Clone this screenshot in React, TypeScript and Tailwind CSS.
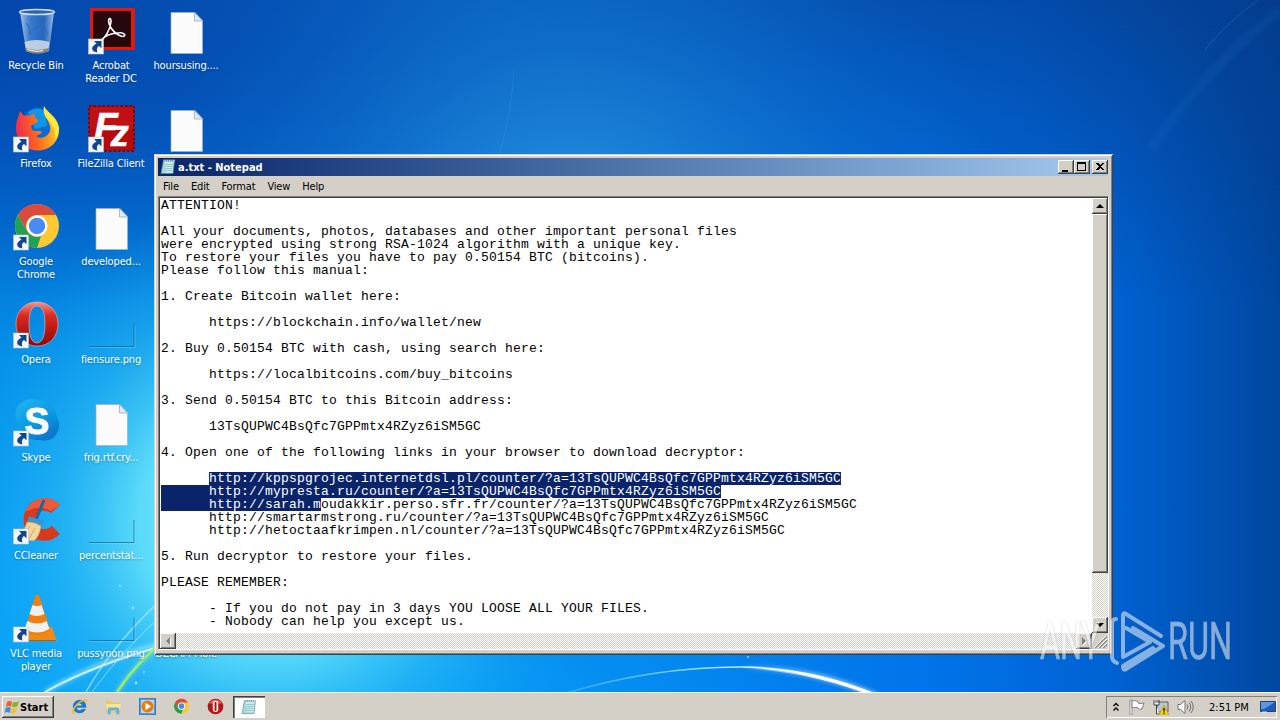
import { ReactElement, ReactNode } from "react";
import cn from "clsx";

const raised =
  "bg-[#d4d0c8] shadow-[inset_-1px_-1px_#404040,inset_1px_1px_#fff,inset_-2px_-2px_#808080]";
const dither =
  "bg-[repeating-conic-gradient(#fff_0_25%,#d4d0c8_0_50%)] bg-[length:2px_2px]";
const uiFont =
  "font-['DejaVu_Sans_Condensed','DejaVu_Sans',sans-serif] [font-stretch:condensed] text-[11px] leading-[13px]";

function Wallpaper(): ReactElement {
  return (
    <svg
      className="absolute inset-0"
      width="1280"
      height="720"
      viewBox="0 0 1280 720"
      preserveAspectRatio="none"
    >
      <defs>
        <linearGradient id="sky" x1="0" y1="0" x2="0" y2="1">
          <stop offset="0" stopColor="#0449ae" />
          <stop offset=".25" stopColor="#0468ce" />
          <stop offset=".5" stopColor="#0490e8" />
          <stop offset=".8" stopColor="#06a0f6" />
          <stop offset="1" stopColor="#08a4f8" />
        </linearGradient>
        <linearGradient id="east" x1="0" x2="1" y1="0" y2="0">
          <stop offset=".3" stopColor="#0070e8" stopOpacity="0" />
          <stop offset=".72" stopColor="#0074ea" />
          <stop offset=".87" stopColor="#0062d2" />
          <stop offset="1" stopColor="#00479f" />
        </linearGradient>
        <linearGradient id="top" x1="0" x2="1" y1="0" y2="0">
          <stop offset="0" stopColor="#0448ae" />
          <stop offset=".4" stopColor="#0558b8" />
          <stop offset=".8" stopColor="#044cab" />
          <stop offset="1" stopColor="#033c8c" />
        </linearGradient>
        <linearGradient id="fade" x1="0" x2="0" y1="0" y2="1">
          <stop offset="0" stopColor="#fff" />
          <stop offset="1" stopColor="#fff" stopOpacity="0" />
        </linearGradient>
        <mask id="topMask">
          <rect width="1280" height="300" fill="url(#fade)" />
        </mask>
        <radialGradient
          id="glow"
          gradientUnits="userSpaceOnUse"
          cx="270"
          cy="520"
          r="330"
        >
          <stop offset="0" stopColor="#8ff4ff" />
          <stop offset=".4" stopColor="#62e0fa" stopOpacity=".92" />
          <stop offset=".65" stopColor="#30bdf5" stopOpacity=".55" />
          <stop offset="1" stopColor="#10a0f0" stopOpacity="0" />
        </radialGradient>
        <radialGradient
          id="haze"
          gradientUnits="userSpaceOnUse"
          cx="570"
          cy="250"
          r="430"
        >
          <stop offset="0" stopColor="#38a8ea" stopOpacity=".8" />
          <stop offset=".45" stopColor="#1c86da" stopOpacity=".5" />
          <stop offset="1" stopColor="#0868cc" stopOpacity="0" />
        </radialGradient>
        <linearGradient id="arc" x1="0" x2="1">
          <stop offset="0" stopColor="#7fd8ff" stopOpacity=".3" />
          <stop offset=".5" stopColor="#a8e6ff" />
          <stop offset=".75" stopColor="#fff" />
        </linearGradient>
        <linearGradient id="arcTail" x1="0" x2="1">
          <stop offset="0" stopColor="#fff" stopOpacity="0" />
          <stop offset=".6" stopColor="#fff" />
        </linearGradient>
        <filter id="soft" x="-20%" y="-40%" width="140%" height="180%">
          <feGaussianBlur stdDeviation="2" />
        </filter>
      </defs>
      <rect width="1280" height="720" fill="url(#sky)" />
      <rect width="1280" height="720" fill="url(#east)" />
      <rect width="1280" height="300" fill="url(#top)" mask="url(#topMask)" />
      <rect width="1280" height="720" fill="url(#glow)" />
      <rect width="1280" height="720" fill="url(#haze)" />
      <g fill="none">
        <path d="M1280 10Q1205 70 1150 150" stroke="#2e86d8" strokeWidth="10" opacity=".1" filter="url(#soft)" />
        <path d="M1258 0Q1225 24 1205 50" stroke="#4a9ce2" opacity=".25" />
        <path d="M514 70Q512 110 498 160" stroke="#4aa8ea" opacity=".2" />
        <path d="M45 692Q110 655 175 640" stroke="#bff2ff" strokeWidth="4" opacity=".6" filter="url(#soft)" />
        <path d="M45 692Q95 664 170 644" stroke="#dcf8ff" strokeWidth="2" opacity=".85" />
        <path d="M86 692Q115 640 170 592" stroke="#c8f6ff" strokeWidth="1.5" opacity=".6" />
        <path d="M92 692Q122 650 172 606" stroke="#c8f6ff" opacity=".6" />
        <path d="M117 692Q138 660 170 636" stroke="#8bea5a" strokeWidth="2.5" />
        <path d="M117 692Q138 660 170 636" stroke="#c8f6a0" strokeWidth="5" opacity=".35" filter="url(#soft)" />
        <path d="M560 695Q650 667 740 667Q812 668 877 696" stroke="url(#arc)" strokeWidth="1.5" />
        <path d="M740 667Q812 668 877 696" stroke="url(#arcTail)" strokeWidth="5" opacity=".6" filter="url(#soft)" />
        <path d="M740 667Q812 669 877 696" stroke="url(#arcTail)" strokeWidth="3.5" />
      </g>
      <g fill="#c8f6ff" opacity=".7">
        <circle cx="120" cy="586" r="1" />
        <circle cx="133" cy="608" r="1.2" />
        <circle cx="136" cy="683" r="1.4" />
        <circle cx="144" cy="672" r="1" />
        <circle cx="748" cy="657" r="1" />
      </g>
    </svg>
  );
}

function ShortcutArrow() {
  return (
    <g transform="translate(1.5 33)">
      <rect width="15" height="15" fill="#f4f8fb" stroke="#b8c6d4" strokeWidth=".6" />
      <path
        d="M5.500 2h7.500v7.300l-2.500-2.300c-2 1.200-2.600 3-1.600 6.500C3.600 13 .8 8.200 8 4.500Z"
        fill="#12468c"
      />
    </g>
  );
}

function RecycleBin() {
  return (
    <>
      <defs>
        <linearGradient id="glass">
          <stop offset="0" stopColor="#c4dcf2" stopOpacity=".85" />
          <stop offset=".3" stopColor="#4f8fd8" stopOpacity=".7" />
          <stop offset=".7" stopColor="#3b7bcc" stopOpacity=".6" />
          <stop offset="1" stopColor="#bcd6f0" stopOpacity=".85" />
        </linearGradient>
      </defs>
      <path d="M8 6h34l-5 39q-12 4-23 0Z" fill="url(#glass)" />
      <path d="M12.500 36q12-4 25 0l-1.200 9q-12 4-22 0Z" fill="#dfe3e6" opacity=".8" />
      <path d="M13.500 42q11 4 23.500 0l-.6 3.500q-11 4.500-22.400 0Z" fill="#8d8378" />
      <path d="M15 43.500q10 3 16 1" stroke="#fff" fill="none" />
      <ellipse cx="25" cy="6" rx="17.500" ry="2.600" fill="#2c65ac" stroke="#cfdce9" strokeWidth="1.500" />
      <path d="M14 17q5 5 4 12M35 12q-7 8-13 12m10-4 4 9" stroke="#2f68b0" strokeWidth="1.500" fill="none" opacity=".7" />
    </>
  );
}

function Acrobat() {
  return (
    <>
      <rect x="3" y="2" width="45" height="42" fill="#e4190e" />
      <rect x="6" y="5" width="38" height="36" fill="#26080c" />
      <path
        d="M12 37c7-6 11-14 12-21 .5-4.500-3-4.500-2.300 0C23 23 30 30 36 30.500c3.500-.5 1.500-4-3.500-3.700-7.500.2-15 2.700-20 9"
        fill="none"
        stroke="#fff"
        strokeWidth="1.600"
      />
    </>
  );
}

function Firefox() {
  return (
    <>
      <defs>
        <linearGradient id="fox" x1="0" y1=".3" x2="1" y2=".1">
          <stop offset="0" stopColor="#f0304a" />
          <stop offset=".4" stopColor="#ff6a1c" />
          <stop offset=".75" stopColor="#ffb020" />
          <stop offset="1" stopColor="#ffd83a" />
        </linearGradient>
      </defs>
      <circle cx="26" cy="21" r="17" fill="#0a6cd4" />
      <path d="M16 8q10-7 17 0l2 14-12 3Z" fill="#12a8f0" opacity=".7" />
      <path
        d="M32 2C34 8 45 12 47 24C48 37 38 46.500 26 46.500C12 46.500 4 36 4 24C4 16 7 12 8 7L12 12C16 11 18 12 20 11L23 9C22 13 23 15 26 16C25 20 20 20 19 22L20 26C24 28 28 26 30 28C28 31 25 31 24 32C28 36 36 33 38 27C40 20 32 14 32 2Z"
        fill="url(#fox)"
      />
      <path d="M32 2C34 8 45 12 47 24C47 29 45 33 43 35C44 26 40 20 36 16C32 12 31 7 32 2Z" fill="#ffe83c" />
    </>
  );
}

function FileZilla() {
  return (
    <>
      <rect x="2" y="2" width="45" height="45" fill="#b50a0e" stroke="#7d0508" strokeWidth="2" strokeDasharray="2.500 2" />
      <path d="M3 3h43v22H3Z" fill="#c81418" opacity=".6" />
      <text
        x="7"
        y="36"
        fontFamily="Liberation Sans, sans-serif"
        fontSize="39"
        fontWeight="700"
        fontStyle="italic"
        fill="#fff"
        stroke="#fff"
        strokeWidth=".6"
      >
        F<tspan dx="-7" dy="6" fontSize="36">z</tspan>
      </text>
    </>
  );
}

function Chrome() {
  return (
    <>
      <circle cx="25" cy="24" r="22" fill="#fcc934" />
      <path d="M6 13A22 22 0 0 1 44 13H25A11 11 0 0 0 15.500 29.500Z" fill="#dc4a3d" />
      <path d="M6 13 15.500 29.500A11 11 0 0 0 29 34L25 46A22 22 0 0 1 6 13Z" fill="#23a055" />
      <circle cx="25" cy="24" r="10.500" fill="#fff" />
      <circle cx="25" cy="24" r="8.200" fill="#4a8af4" />
    </>
  );
}

function Opera() {
  return (
    <>
      <defs>
        <linearGradient id="operaRed" x1="0" y1="0" x2="0" y2="1">
          <stop offset="0" stopColor="#f4948a" />
          <stop offset=".3" stopColor="#dc2a20" />
          <stop offset="1" stopColor="#8e0606" />
        </linearGradient>
      </defs>
      <path
        fillRule="evenodd"
        d="M25 2C12 2 4 12 4 24s8 22 21 22 21-10 21-22S38 2 25 2Zm0 4c6 0 8 8 8 18s-2 19-8 19-8-9-8-19 2-18 8-18Z"
        fill="url(#operaRed)"
        stroke="#f0b8b0"
        strokeWidth=".6"
      />
    </>
  );
}

function Skype() {
  return (
    <>
      <defs>
        <linearGradient id="skype" x1="0" y1="0" x2=".6" y2="1">
          <stop offset="0" stopColor="#22b4f2" />
          <stop offset=".6" stopColor="#0c9ae2" />
          <stop offset="1" stopColor="#0a78cc" />
        </linearGradient>
      </defs>
      <path
        d="M14 2c5-2 8 0 12 0 11 1 18 8 19 18 4 6 2 14-3 19-4 4-9 4-14 3C15 43 7 36 6 25 0 16 5 5 14 2Z"
        fill="url(#skype)"
      />
      <text x="12.5" y="35.5" fontFamily="Liberation Sans, sans-serif" fontSize="37" fontWeight="700" fill="#fff" stroke="#fff" strokeWidth="1">S</text>
    </>
  );
}

function CCleaner() {
  return (
    <>
      <path
        d="M48 9C42 2 32 0 22 5 9 13 8 32 20 41c9 6 20 5 28-3l-8-8c-6 5-14 4-16-3-2-9 6-16 15-10Z"
        fill="#d8381e"
      />
      <path d="M48 9C42 2 32 0 22 5q-6 4-9 11 15-8 26-1Z" fill="#ec5a3a" />
      <path d="m32 4-8 20" stroke="#1668a8" strokeWidth="3" />
      <path d="m17 20 15 5-3 6-14-4Z" fill="#3c94cc" />
      <path d="M15 26q8 0 14 4c-1 8-4 13-8 15L3 42q9-5 12-16Z" fill="#f6d49a" stroke="#c89c5c" strokeWidth=".6" />
      <path d="M18 30 10 42m13-10-6 11" stroke="#d4a868" />
    </>
  );
}

function Vlc() {
  return (
    <>
      <path d="M10 33h30l5 14H3Z" fill="#f08a14" />
      <path d="M23.500 1q2-1 4 1l11 35q-13 8-26 0Z" fill="#f07e10" />
      <path d="m20.500 11-3 9q7 4 15 0l-3-9q-5 2-9 0Zm-5 16-3 8q13 7 25 0l-3-8q-9 5-19 0Z" fill="#eef0f2" />
      <path d="M6 46.500h38" stroke="#b85c08" />
    </>
  );
}

function Paper() {
  return (
    <>
      <path d="M9 6.500h24l7.500 8V47.500H9Z" fill="#fbfbfc" stroke="#9cb0c4" strokeWidth=".7" />
      <path d="M32.500 6.500v8.500h8Z" fill="#e2e9f0" stroke="#8fa4b8" strokeWidth=".7" />
    </>
  );
}

function BlankImage() {
  return (
    <>
      <path d="M2 46.500h45V24" fill="none" stroke="#0c5c88" opacity=".65" />
      <path d="M2 47.500h46V25" fill="none" stroke="#9fe4ff" opacity=".3" />
    </>
  );
}

type DesktopItem = {
  title: string;
  icon?: ReactNode;
  shortcut?: boolean;
};

const columns: DesktopItem[][] = [
  [
    { title: "Recycle Bin", icon: <RecycleBin /> },
    { title: "Firefox", icon: <Firefox />, shortcut: true },
    { title: "Google Chrome", icon: <Chrome />, shortcut: true },
    { title: "Opera", icon: <Opera />, shortcut: true },
    { title: "Skype", icon: <Skype />, shortcut: true },
    { title: "CCleaner", icon: <CCleaner />, shortcut: true },
    { title: "VLC media player", icon: <Vlc />, shortcut: true },
  ],
  [
    { title: "Acrobat Reader DC", icon: <Acrobat />, shortcut: true },
    { title: "FileZilla Client", icon: <FileZilla />, shortcut: true },
    { title: "developed...", icon: <Paper /> },
    { title: "fiensure.png", icon: <BlankImage /> },
    { title: "frig.rtf.cry...", icon: <Paper /> },
    { title: "percentstat...", icon: <BlankImage /> },
    { title: "pussynon.png", icon: <BlankImage /> },
  ],
  [
    { title: "hoursusing....", icon: <Paper /> },
    { title: "", icon: <Paper /> },
    { title: "" },
    { title: "" },
    { title: "" },
    { title: "" },
    { title: "DECAM-Mole" },
  ],
];

function DesktopIcon({ title, icon, shortcut }: DesktopItem): ReactElement {
  return (
    <div className="flex h-[98px] w-[75px] flex-col items-center">
      <svg width="48" height="48" viewBox="0 0 48 48" className="shrink-0 overflow-visible">
        {icon}
        {shortcut && <ShortcutArrow />}
      </svg>
      <span
        className={cn(
          uiFont,
          "mt-[5px] max-w-[74px] text-center tracking-[-0.15px] text-white [text-shadow:0_1px_2px_rgba(0,30,80,.4)]"
        )}
      >
        {title}
      </span>
    </div>
  );
}

function NotepadIcon() {
  return (
    <svg width="16" height="16" viewBox="0 0 16 16">
      <path d="M3.500 1.500h11l-1.500 13H1Z" fill="#a9d8dc" stroke="#5c8c98" strokeWidth=".7" />
      <path d="M4.500 3h9l-1 10.500h-7Z" fill="#c8ecec" />
      <path d="M5 5.500h8M4.800 7.500h8M4.600 9.500h8M4.400 11.500h8" stroke="#7cb8c0" strokeWidth=".7" />
      <path d="M4 .5v2M6 .5v2M8 .5v2M10 .5v2M12 .5v2M14 .5v2" stroke="#e8f4f4" />
      <path d="M4.500 1v2M6.500 1v2M8.500 1v2M10.500 1v2M12.500 1v2" stroke="#507880" strokeWidth=".5" />
    </svg>
  );
}

const before = `ATTENTION!

All your documents, photos, databases and other important personal files
were encrypted using strong RSA-1024 algorithm with a unique key.
To restore your files you have to pay 0.50154 BTC (bitcoins).
Please follow this manual:

1. Create Bitcoin wallet here:

      https://blockchain.info/wallet/new

2. Buy 0.50154 BTC with cash, using search here:

      https://localbitcoins.com/buy_bitcoins

3. Send 0.50154 BTC to this Bitcoin address:

      13TsQUPWC4BsQfc7GPPmtx4RZyz6iSM5GC

4. Open one of the following links in your browser to download decryptor:

      `;
const selected = [
  "http://kppspgrojec.internetdsl.pl/counter/?a=13TsQUPWC4BsQfc7GPPmtx4RZyz6iSM5GC",
  "      http://mypresta.ru/counter/?a=13TsQUPWC4BsQfc7GPPmtx4RZyz6iSM5GC",
  "      http://sarah.m",
];
const after = `oudakkir.perso.sfr.fr/counter/?a=13TsQUPWC4BsQfc7GPPmtx4RZyz6iSM5GC
      http://smartarmstrong.ru/counter/?a=13TsQUPWC4BsQfc7GPPmtx4RZyz6iSM5GC
      http://hetoctaafkrimpen.nl/counter/?a=13TsQUPWC4BsQfc7GPPmtx4RZyz6iSM5GC

5. Run decryptor to restore your files.

PLEASE REMEMBER:

      - If you do not pay in 3 days YOU LOOSE ALL YOUR FILES.
      - Nobody can help you except us.`;

function ArrowButton({ d, disabled }: { d: string; disabled?: boolean }) {
  return (
    <div className={cn(raised, "size-4 shrink-0")}>
      <svg width="16" height="16" viewBox="0 0 16 16">
        {disabled && <path d={d} fill="#fff" transform="translate(1 1)" />}
        <path d={d} fill={disabled ? "#808080" : "#000"} />
      </svg>
    </div>
  );
}

function Notepad(): ReactElement {
  return (
    <div className="absolute left-[154px] top-[154px] flex h-[501px] w-[959px] flex-col bg-[#d4d0c8] p-1 pb-1.5 pr-[5px] shadow-[inset_1px_1px_#d4d0c8,inset_-1px_-1px_#404040,inset_2px_2px_#fff,inset_-2px_-2px_#808080]">
      <div className="flex h-[18px] shrink-0 items-center bg-linear-to-r from-[#0a246a] to-[#a6caf0] pl-[2px]">
        <NotepadIcon />
        <span className={cn(uiFont, "ml-[2px] flex-1 font-bold text-white")}>
          a.txt - Notepad
        </span>
        {[
          "M4 10h6v2H4Z",
          "M3 2h9v9H3ZM4 4v6h7V4Z",
          "M4 3h2l2 2 2-2h2L9 6.500l3 3.500h-2L8 8l-2 2H4l3-3.500Z",
        ].map((d, i) => (
          <div key={d} className={cn(raised, "h-[14px] w-4", i === 2 && "ml-0.5")}>
            <svg width="16" height="14" viewBox="0 0 16 14" shapeRendering="crispEdges">
              <path d={d} fillRule="evenodd" />
            </svg>
          </div>
        ))}
      </div>
      <div className={cn(uiFont, "flex h-5 shrink-0 items-center gap-[12px] pl-[5px] tracking-[-0.15px] text-black")}>
        {["File", "Edit", "Format", "View", "Help"].map((item) => (
          <span key={item}>{item}</span>
        ))}
      </div>
      <div className="flex min-h-0 flex-1 flex-col bg-white pl-0.5 pt-0.5 shadow-[inset_1px_1px_#808080,inset_2px_2px_#404040,1px_1px_#fff]">
        <div className="flex min-h-0 flex-1">
          <pre className="min-w-0 flex-1 overflow-hidden pl-px pt-px font-['Liberation_Mono',monospace] text-[13px] leading-[13px] tracking-[0.2px] text-black">
            {before}
            {selected.map((line, i) => (
              <span key={line}>
                <span className="inline-block h-[13px] bg-[#0a246a] align-top text-white">{line}</span>
                {i < 2 && "\n"}
              </span>
            ))}
            {after}
          </pre>
          <div className={cn(dither, "flex w-4 flex-col")}>
            <ArrowButton d="M8 6l4 4H4Z" />
            <div className={cn(raised, "h-[359px]")} />
            <div className="flex-1" />
            <ArrowButton d="M4 6h8l-4 4Z" />
          </div>
        </div>
        <div className="flex h-4 shrink-0">
          <div className={cn(dither, "flex flex-1 justify-between")}>
            <ArrowButton d="M10 4v8L6 8Z" disabled />
            <ArrowButton d="M6 4v8l4-4Z" disabled />
          </div>
          <svg width="16" height="16" viewBox="0 0 16 16" className="bg-[#d4d0c8]">
            <path d="M15 3 3 15M15 7l-8 8M15 11l-4 4" stroke="#808080" strokeWidth="1.500" />
            <path d="M15 2 2 15M15 6l-9 9M15 10l-5 5" stroke="#fff" />
          </svg>
        </div>
      </div>
    </div>
  );
}

function Watermark() {
  return (
    <svg
      className="absolute left-[1036px] top-[606px] drop-shadow-[0_0_1px_rgba(60,80,110,.5)]"
      width="230"
      height="74"
      viewBox="0 0 230 74"
      fill="#fff"
      opacity=".52"
    >
      <g fontFamily="Roboto, sans-serif" fontSize="51" stroke="#fff" strokeWidth=".6">
        <text x="4" y="53" textLength="60" lengthAdjust="spacingAndGlyphs">ANY</text>
        <text x="132" y="53" textLength="64" lengthAdjust="spacingAndGlyphs">RUN</text>
      </g>
      <g fill="none" stroke="#fff" strokeWidth="4" strokeLinejoin="round" strokeLinecap="round">
        <path d="M80 13q-4 0-4 4v34q0 4 5 6" />
        <path d="M125 30 90 8q-3-2-3 2v41l27-15-24-14" />
        <path d="m97 22 30 18-37 23q-3 2-3-3l30-18" />
      </g>
    </svg>
  );
}

function SmallIcon({ children }: { children: ReactNode }) {
  return (
    <svg width="17" height="17" viewBox="0 0 50 50">
      {children}
    </svg>
  );
}

function Taskbar(): ReactElement {
  return (
    <div
      className={cn(
        uiFont,
        "relative flex h-7 shrink-0 items-center border-t border-white bg-[#d4d0c8] pl-0.5 pr-[3px] text-black"
      )}
    >
      <div className={cn(raised, "mt-px flex h-[22px] w-[52px] items-center pl-[2px] font-bold")}>
        <svg width="16" height="16" viewBox="0 0 16 16">
          <path d="M3 3q3-2 5 0L7 8Q5 6 2 8Z" fill="#ee6028" />
          <path d="M9 3q3 1 6-1l-1.500 5Q11 9 8 7.500Z" fill="#7cb828" />
          <path d="M1.800 9q2.700-2 5 0l-1 5Q3 12 .5 14Z" fill="#3a8ee0" />
          <path d="M7.800 9q3 1 5.500-.5L12 13q-3 2-5.500 1Z" fill="#f8c020" />
        </svg>
        <span>Start</span>
      </div>
      <div className="ml-[17px] flex items-center gap-[17px]">
        <SmallIcon>
          <path fillRule="evenodd" d="M25 5a20 20 0 1 0 19 27H32c-4 6-14 5-15-3h28C46 15 38 5 25 5Zm-8 17c2-8 14-8 15 0Z" fill="#1c78d0" />
          <path d="M4 46C-4 36 26 2 44 3c6 1 3 9 0 13 1-6-1-8-6-7C22 13 4 38 8 42c3 2 8 0 12-3-6 6-13 10-16 7Z" fill="#f0c030" />
        </SmallIcon>
        <SmallIcon>
          <path d="M3 8h16l4 5h22v30H3Z" fill="#e8c860" />
          <path d="M3 18h44l-3 18H6Z" fill="#f8e498" />
          <path d="M8 48V34q0-6 6-6h22q6 0 6 6v14h-9V36H17v12Z" fill="#60b4e0" />
        </SmallIcon>
        <SmallIcon>
          <path d="M1 1h48v48H1Z" fill="#5c9cdc" stroke="#2c70b8" strokeWidth="3" />
          <path d="M6 6h38v38H6Z" fill="#b8d8f4" />
          <circle cx="25" cy="25" r="18" fill="#f07c08" />
          <path d="m19 14 17 11-17 11Z" fill="#fff" />
        </SmallIcon>
        <SmallIcon>
          <Chrome />
        </SmallIcon>
        <SmallIcon>
          <circle cx="25" cy="25" r="23" fill="#b81418" />
          <path d="M6 16a22 22 0 0 1 38 0Z" fill="#e86460" />
          <rect x="17" y="8" width="16" height="33" rx="8" fill="#fff" />
          <rect x="22" y="11" width="6" height="27" rx="3" fill="#b81418" />
        </SmallIcon>
      </div>
      <div className="ml-[9px] mt-px flex h-[22px] w-8 items-center justify-center bg-white shadow-[inset_1px_1px_#404040,inset_2px_2px_#808080,inset_-1px_-1px_#fff]">
        <NotepadIcon />
      </div>
      <div className="ml-auto mt-px flex h-[22px] w-[171px] items-center pl-[6px] shadow-[inset_1px_1px_#808080,inset_-1px_-1px_#fff]">
        <svg width="8" height="10" viewBox="0 0 8 10" fill="none" stroke="#000" strokeWidth="1.300">
          <path d="m1.500 4 2.500-2.500L6.500 4M1.500 8.500 4 6l2.500 2.500" />
        </svg>
        <svg className="ml-[8px]" width="17" height="16" viewBox="0 0 17 16">
          <path d="M2 1h2v15H2Z" fill="#fff" stroke="#707070" strokeWidth=".7" />
          <path d="M4 2q3-1 6 .5v1.500q3 1 6 0L14 10q-3 1-5-1.500Q6 8 4 9Z" fill="#fff" stroke="#686868" strokeWidth=".8" />
        </svg>
        <svg className="ml-[8px]" width="16" height="16" viewBox="0 0 16 16">
          <path d="M4 3h11v10H4Z" fill="#b8c8d8" stroke="#606060" />
          <path d="M1 1v5h5V1M3.500 6v9H6M3 1v3M5 1v3" fill="#fff" stroke="#404040" />
          <path d="m11 6 5 10H6Z" fill="#f8d410" stroke="#a88800" strokeWidth=".6" />
          <path d="M11 9v3.500M11 13.500v1.200" stroke="#000" strokeWidth="1.300" />
        </svg>
        <svg className="ml-[8px]" width="17" height="16" viewBox="0 0 17 16" fill="none" stroke="#707070">
          <path d="M1 5.500h2.500L8 1.500v13l-4.500-4H1Z" fill="#fff" />
          <path d="M10 5.500q2 2.500 0 5M12 3.500q3.500 4.500 0 9M14 2q4.500 6 0 12" />
        </svg>
        <span className="ml-[15px] whitespace-nowrap">2:51 PM</span>
        <svg className="ml-auto mr-px" width="16" height="14" viewBox="0 0 16 14">
          <path d="M.5 1.500h15v10H.5Z" fill="#1c5cc0" stroke="#24406c" />
          <path d="M1 2h14L4 9H1Z" fill="#5c98e0" />
          <path d="M2 11.500h5v1.500H2Z" fill="#d8e8f8" />
        </svg>
      </div>
    </div>
  );
}

export default function App(): ReactElement {
  return (
    <div className="relative flex h-[720px] w-[1280px] flex-col overflow-hidden">
      <Wallpaper />
      <main className="relative flex min-h-0 flex-1 pt-[6px]">
        <div className="-ml-[1.5px] flex">
          {columns.map((items, i) => (
            <div key={i} className="flex flex-col">
              {items.map((item, j) => (
                <DesktopIcon key={j} {...item} />
              ))}
            </div>
          ))}
        </div>
        <Notepad />
        <Watermark />
      </main>
      <Taskbar />
    </div>
  );
}
